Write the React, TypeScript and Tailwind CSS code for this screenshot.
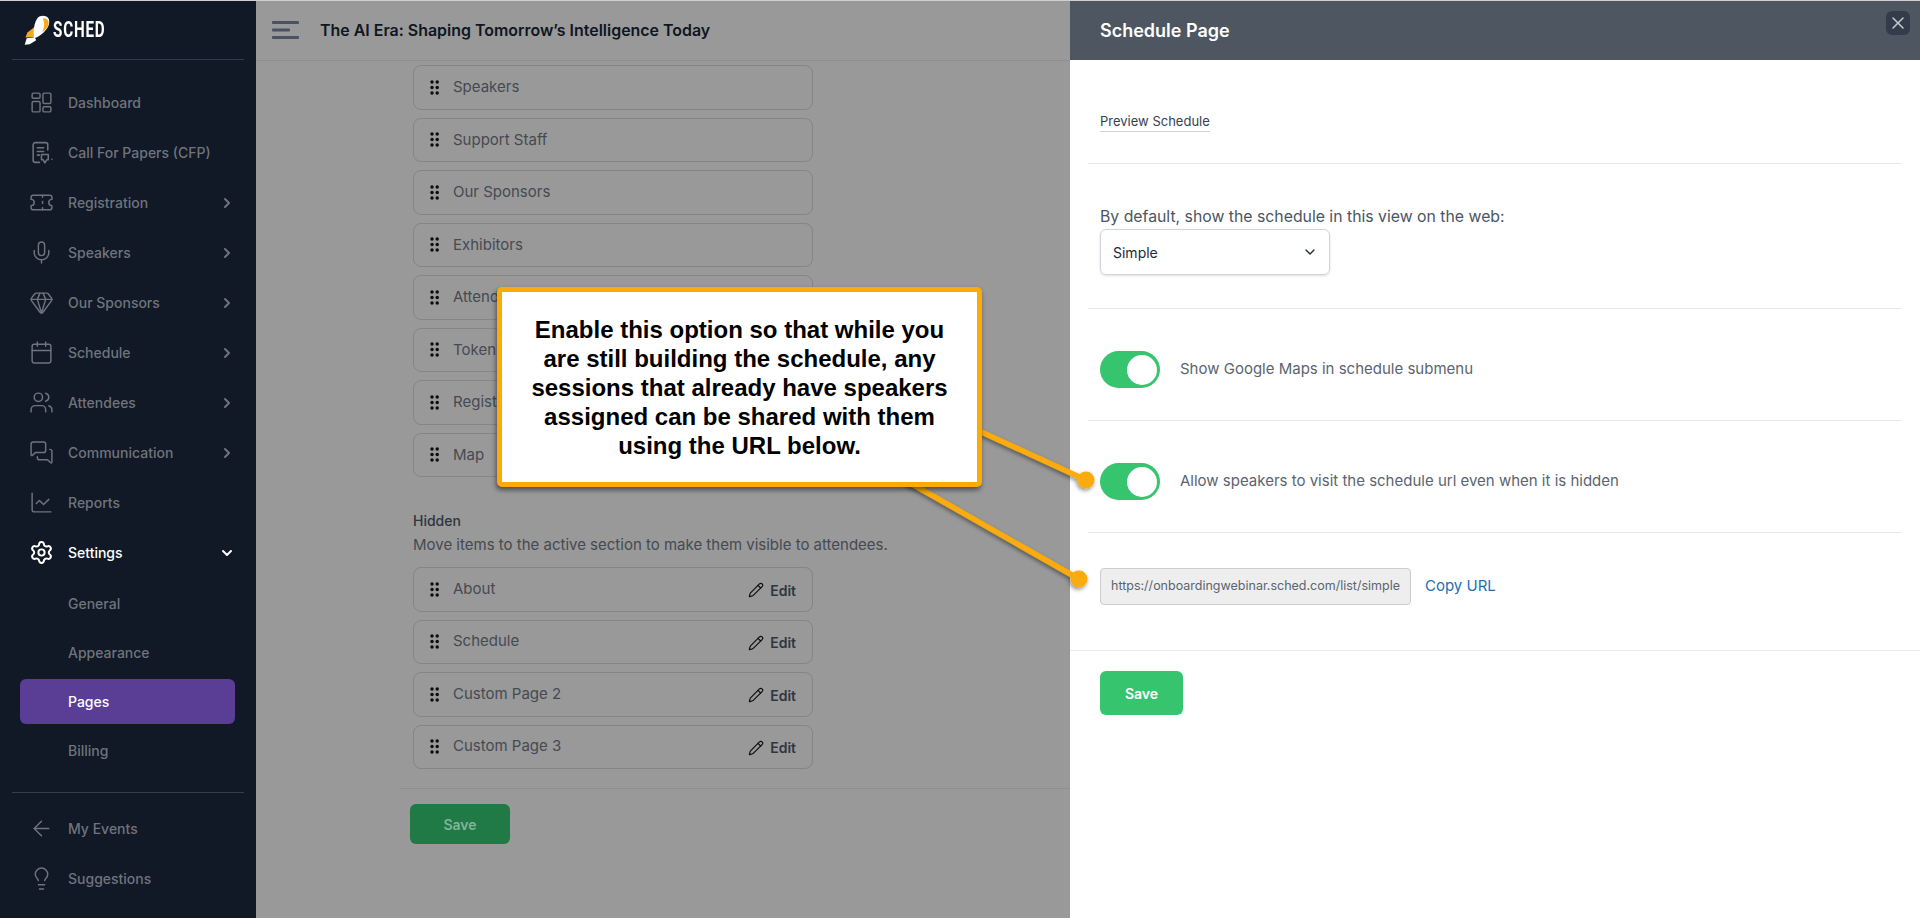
import React from "react";
import { ChevronRight, ChevronDown, Mic, Gem, Calendar, Users, MessagesSquare, ChartLine, Settings, ArrowLeft, Lightbulb, Ticket, Pencil, X } from "lucide-react";

const Inter = "font-['Inter',sans-serif]";

function Cfp({ className }: { className?: string }) {
  return (
    <svg viewBox="0 0 24 24" fill="none" stroke="currentColor" strokeWidth="1.5" strokeLinecap="round" strokeLinejoin="round" className={className}>
      <path d="M10 21.5H6a2 2 0 0 1-2-2V4.5a2 2 0 0 1 2-2h10a2 2 0 0 1 2 2v5" />
      <path d="M8 7.5h6M8 11h6M8 14.5h2" />
      <path d="M12 14h6.5v5h-1.5l-1.8 3-1.6-3h-1.6z" />
      <path d="M22 18.5h.01" />
    </svg>
  );
}

function DashIcon({ className }: { className?: string }) {
  return (
    <svg viewBox="0 0 24 24" fill="none" stroke="currentColor" strokeWidth="1.4" strokeLinejoin="round" className={className}>
      <rect x="3" y="3" width="7.6" height="5" rx="1.2" />
      <rect x="3" y="11" width="7.6" height="10" rx="1.2" />
      <rect x="13.4" y="3" width="7.6" height="10" rx="1.2" />
      <rect x="13.4" y="16" width="7.6" height="5" rx="1.2" />
    </svg>
  );
}

function Logo() {
  return (
    <svg viewBox="25 30 80 95" className="w-[27px] h-[32px]">
      <path d="M60 68 L38 85 L32 100 L60 98 Z" fill="#f5a81c" />
      <path d="M30 121 L36 102 L60 99 L64 108 L45 120 Z" fill="#ffffff" />
      <path d="M58 102 C54 82 58 56 68 42 C76 33 92 33 100 42 C106 52 102 68 92 78 C84 88 72 98 58 102 Z" fill="#ffffff" />
      <path d="M84 44 C94 42 102 48 101 58 C100 68 92 76 82 84 C88 70 90 56 84 44 Z" fill="#f5a81c" />
    </svg>
  );
}

function NavItem({ icon, label, arrow, active }: { icon?: React.ReactNode; label: string; arrow?: "right" | "down"; active?: boolean }) {
  return (
    <div className={`h-[50px] flex items-center pl-[29px] pr-[21px] ${active ? "text-white" : "text-[#6f747c]"}`}>
      <span className="w-[39px] flex items-center">{icon}</span>
      <span className={`text-[14px] font-medium flex-1 ${Inter}`}>{label}</span>
      {arrow === "right" && <ChevronRight size={16} strokeWidth={3} className="mt-[2px]" />}
      {arrow === "down" && <ChevronDown size={16} strokeWidth={3} className="mt-[2px]" />}
    </div>
  );
}

function SubItem({ label, active }: { label: string; active?: boolean }) {
  return (
    <div className={`h-[45px] mb-[4px] mx-[20px] w-[215px] rounded-[6px] flex items-center pl-[48px] text-[14px] font-medium ${Inter} ${active ? "bg-[#5a3e96] text-white" : "text-[#6f747c]"}`}>
      {label}
    </div>
  );
}

function Dots() {
  return (
    <svg viewBox="0 0 9 15" className="w-[9px] h-[15px] shrink-0 text-[#0c0c0c]" fill="currentColor">
      <circle cx="2" cy="2" r="1.7" /><circle cx="7.2" cy="2" r="1.7" />
      <circle cx="2" cy="7.5" r="1.7" /><circle cx="7.2" cy="7.5" r="1.7" />
      <circle cx="2" cy="13" r="1.7" /><circle cx="7.2" cy="13" r="1.7" />
    </svg>
  );
}

function Row({ label, edit }: { label: string; edit?: boolean }) {
  return (
    <div className={`h-[44.5px] rounded-[8px] border border-[#858585] flex items-center pl-[16px] pr-[16px] ${Inter}`}>
      <Dots />
      <span className={`ml-[14px] text-[15px] text-[#454a52] flex-1 ${edit ? "mb-[1px]" : ""}`}>{label}</span>
      {edit && (
        <span className="flex items-center gap-[6px] text-[#2f3640] text-[14px] font-semibold mt-[2px]">
          <Pencil size={16} strokeWidth={1.7} className="text-[#0c0c0c]" />
          Edit
        </span>
      )}
    </div>
  );
}

function Toggle() {
  return (
    <div className="w-[60px] h-[37px] rounded-full bg-[#36c46f] flex items-center justify-end pr-[3px] shrink-0">
      <div className="w-[30px] h-[30px] rounded-full bg-white" />
    </div>
  );
}

export default function App() {
  return (
    <div className={`relative w-full h-[918px] overflow-hidden flex bg-[#999999] ${Inter}`}>
      {/* Sidebar */}
      <aside className="w-[256px] shrink-0 bg-[#111826] flex flex-col">
        <div className="h-[60px] mx-[12px] border-b border-[#2f3a4c] flex items-center pl-[11px]">
          <Logo />
          <span className="ml-[3px] text-white font-['Roboto',sans-serif] font-bold text-[22px] tracking-[1.2px] scale-x-[0.69] origin-left leading-none">SCHED</span>
        </div>
        <div className="pt-[17px]">
          <NavItem icon={<DashIcon className="w-[25px] h-[25px]" />} label="Dashboard" />
          <NavItem icon={<Cfp className="w-[25px] h-[25px]" />} label="Call For Papers (CFP)" />
          <NavItem icon={<Ticket size={25} strokeWidth={1.4} />} label="Registration" arrow="right" />
          <NavItem icon={<Mic size={25} strokeWidth={1.4} />} label="Speakers" arrow="right" />
          <NavItem icon={<Gem size={25} strokeWidth={1.4} />} label="Our Sponsors" arrow="right" />
          <NavItem icon={<Calendar size={25} strokeWidth={1.4} />} label="Schedule" arrow="right" />
          <NavItem icon={<Users size={25} strokeWidth={1.4} />} label="Attendees" arrow="right" />
          <NavItem icon={<MessagesSquare size={25} strokeWidth={1.4} />} label="Communication" arrow="right" />
          <NavItem icon={<ChartLine size={25} strokeWidth={1.4} />} label="Reports" />
          <NavItem active icon={<Settings size={25} strokeWidth={1.9} />} label="Settings" arrow="down" />
          <div className="pt-[4px]">
            <SubItem label="General" />
            <SubItem label="Appearance" />
            <SubItem active label="Pages" />
            <SubItem label="Billing" />
          </div>
        </div>
        <div className="mx-[12px] mt-[15px] border-t border-[#363e4b]" />
        <div className="pt-[10px]">
          <NavItem icon={<ArrowLeft size={25} strokeWidth={1.4} />} label="My Events" />
          <NavItem icon={<Lightbulb size={25} strokeWidth={1.4} />} label="Suggestions" />
        </div>
      </aside>

      {/* Main dimmed page */}
      <main className="w-[814px] shrink-0 bg-[#999999]">
        <header className="h-[61px] border-b border-[#8e8e8e] flex items-center pl-[16px]">
          <svg viewBox="0 0 27 18" className="w-[27px] h-[18px] text-[#4a5160]" fill="currentColor">
            <rect x="0" y="0" width="27" height="3" rx="1" />
            <rect x="0" y="7.5" width="18" height="3" rx="1" />
            <rect x="0" y="15" width="27" height="3" rx="1" />
          </svg>
          <h1 className="ml-[21px] text-[15.95px] font-semibold text-[#0f1622] mt-[1px]">The AI Era: Shaping Tomorrow’s Intelligence Today</h1>
        </header>
        <div className="pt-[4px] pl-[157px] w-[557px]">
          <div className="flex flex-col gap-[8px]">
            <Row label="Speakers" />
            <Row label="Support Staff" />
            <Row label="Our Sponsors" />
            <Row label="Exhibitors" />
            <Row label="Attendees" />
            <Row label="Tokens" />
            <Row label="Registration" />
            <Row label="Map" />
          </div>
          <div className="mt-[34px] text-[14px] font-medium text-[#30353d] leading-[20px]">Hidden</div>
          <div className="mt-[4px] text-[15px] text-[#454a52] leading-[20px] whitespace-nowrap">Move items to the active section to make them visible to attendees.</div>
          <div className="mt-[12px] flex flex-col gap-[8px]">
            <Row edit label="About" />
            <Row edit label="Schedule" />
            <Row edit label="Custom Page 2" />
            <Row edit label="Custom Page 3" />
          </div>
        </div>
        <div className="mt-[19px] ml-[144px] border-t border-[#8e8e8e] pt-[15px] pl-[10px]">
          <button className="w-[100px] h-[40px] rounded-[6px] bg-[#1f7a45] text-[#80b598] text-[14px] font-semibold">Save</button>
        </div>
      </main>

      {/* Slide-over panel */}
      <section className="flex-1 bg-white flex flex-col">
        <div className="h-[60px] bg-[#4e5761] flex items-center justify-between pl-[30px] relative">
          <h2 className="text-[18px] font-semibold text-white">Schedule Page</h2>
          <button className="absolute top-[11px] right-[10px] w-[24px] h-[24px] rounded-[6px] bg-[#323c4a] flex items-center justify-center text-[#c7cacf]">
            <X size={20} strokeWidth={1.8} />
          </button>
        </div>
        <div className="h-[104px] mx-[18px] border-b border-[#e7e8ea] pl-[12px] pt-[48px]">
          <span className="inline-block text-[13px] text-[#374151] border-b border-[#cfd2d6] leading-[18px] pb-[1px]">Preview Schedule</span>
        </div>
        <div className="h-[145px] mx-[18px] border-b border-[#e7e8ea] pl-[12px] pt-[43px]">
          <div className="text-[15.8px] text-[#4b5563] leading-[20px] whitespace-nowrap">By default, show the schedule in this view on the web:</div>
          <div className="mt-[2px] w-[230px] h-[46px] rounded-[6px] border border-[#d1d5db] shadow-sm flex items-center justify-between pl-[12px] pr-[11px] text-[14px] text-[#1f2937]">
            Simple
            <ChevronDown size={16} strokeWidth={2} />
          </div>
        </div>
        <div className="h-[112px] mx-[18px] border-b border-[#e7e8ea] pl-[12px] pt-[10px] flex items-center gap-[20px]">
          <Toggle />
          <span className="text-[15px] text-[#5b6470]">Show Google Maps in schedule submenu</span>
        </div>
        <div className="h-[112px] mx-[18px] border-b border-[#e7e8ea] pl-[12px] pt-[10px] flex items-center gap-[20px]">
          <Toggle />
          <span className="text-[15px] text-[#5b6470]">Allow speakers to visit the schedule url even when it is hidden</span>
        </div>
        <div className="h-[118px] border-b border-[#e7e8ea] pl-[30px] flex items-center pb-[10px]">
          <div className="w-[311px] h-[37px] rounded-[4px] border border-[#cccccc] bg-[#eeeeee] flex items-center pl-[10px] text-[12.5px] text-[#5b6470] whitespace-nowrap overflow-hidden">
            https://onboardingwebinar.sched.com/list/simple
          </div>
          <a className="ml-[14px] text-[15px] text-[#1d6fb8]">Copy URL</a>
        </div>
        <div className="pl-[30px] pt-[20px]">
          <button className="w-[83px] h-[44px] rounded-[6px] bg-[#36c46f] text-white text-[14px] font-semibold">Save</button>
        </div>
      </section>

      {/* Annotation connectors */}
      <svg className="absolute inset-0 w-[1920px] h-[918px] pointer-events-none" viewBox="0 0 1920 918">
        <defs>
          <filter id="sh" x="-20%" y="-20%" width="140%" height="140%">
            <feDropShadow dx="-1" dy="2" stdDeviation="2" floodColor="#000" floodOpacity="0.45" />
          </filter>
        </defs>
        <g filter="url(#sh)" fill="#fbab07" stroke="#fbab07">
          <path d="M975 429 L1086 480" strokeWidth="5.5" fill="none" />
          <circle cx="1086" cy="480" r="8.5" strokeWidth="0" />
          <path d="M905 480 L1079 579" strokeWidth="5.5" fill="none" />
          <circle cx="1079" cy="579" r="8.5" strokeWidth="0" />
        </g>
      </svg>

      {/* Annotation callout */}
      <div className="absolute left-[497px] top-[287px] w-[485px] h-[200px] bg-white border-[5px] border-[#fbab07] rounded-[5px] shadow-[-1px_3px_5px_rgba(0,0,0,0.5)] flex items-center justify-center">
        <p className="font-['Liberation_Sans',sans-serif] font-bold text-[24px] leading-[29px] text-black text-center w-[450px]">
          Enable this option so that while you are still building the schedule, any sessions that already have speakers assigned can be shared with them using the URL below.
        </p>
      </div>

      {/* Thin light line along the top edge of the capture */}
      <div className="absolute top-0 inset-x-0 h-px bg-[#cfcfcf]" />
    </div>
  );
}
